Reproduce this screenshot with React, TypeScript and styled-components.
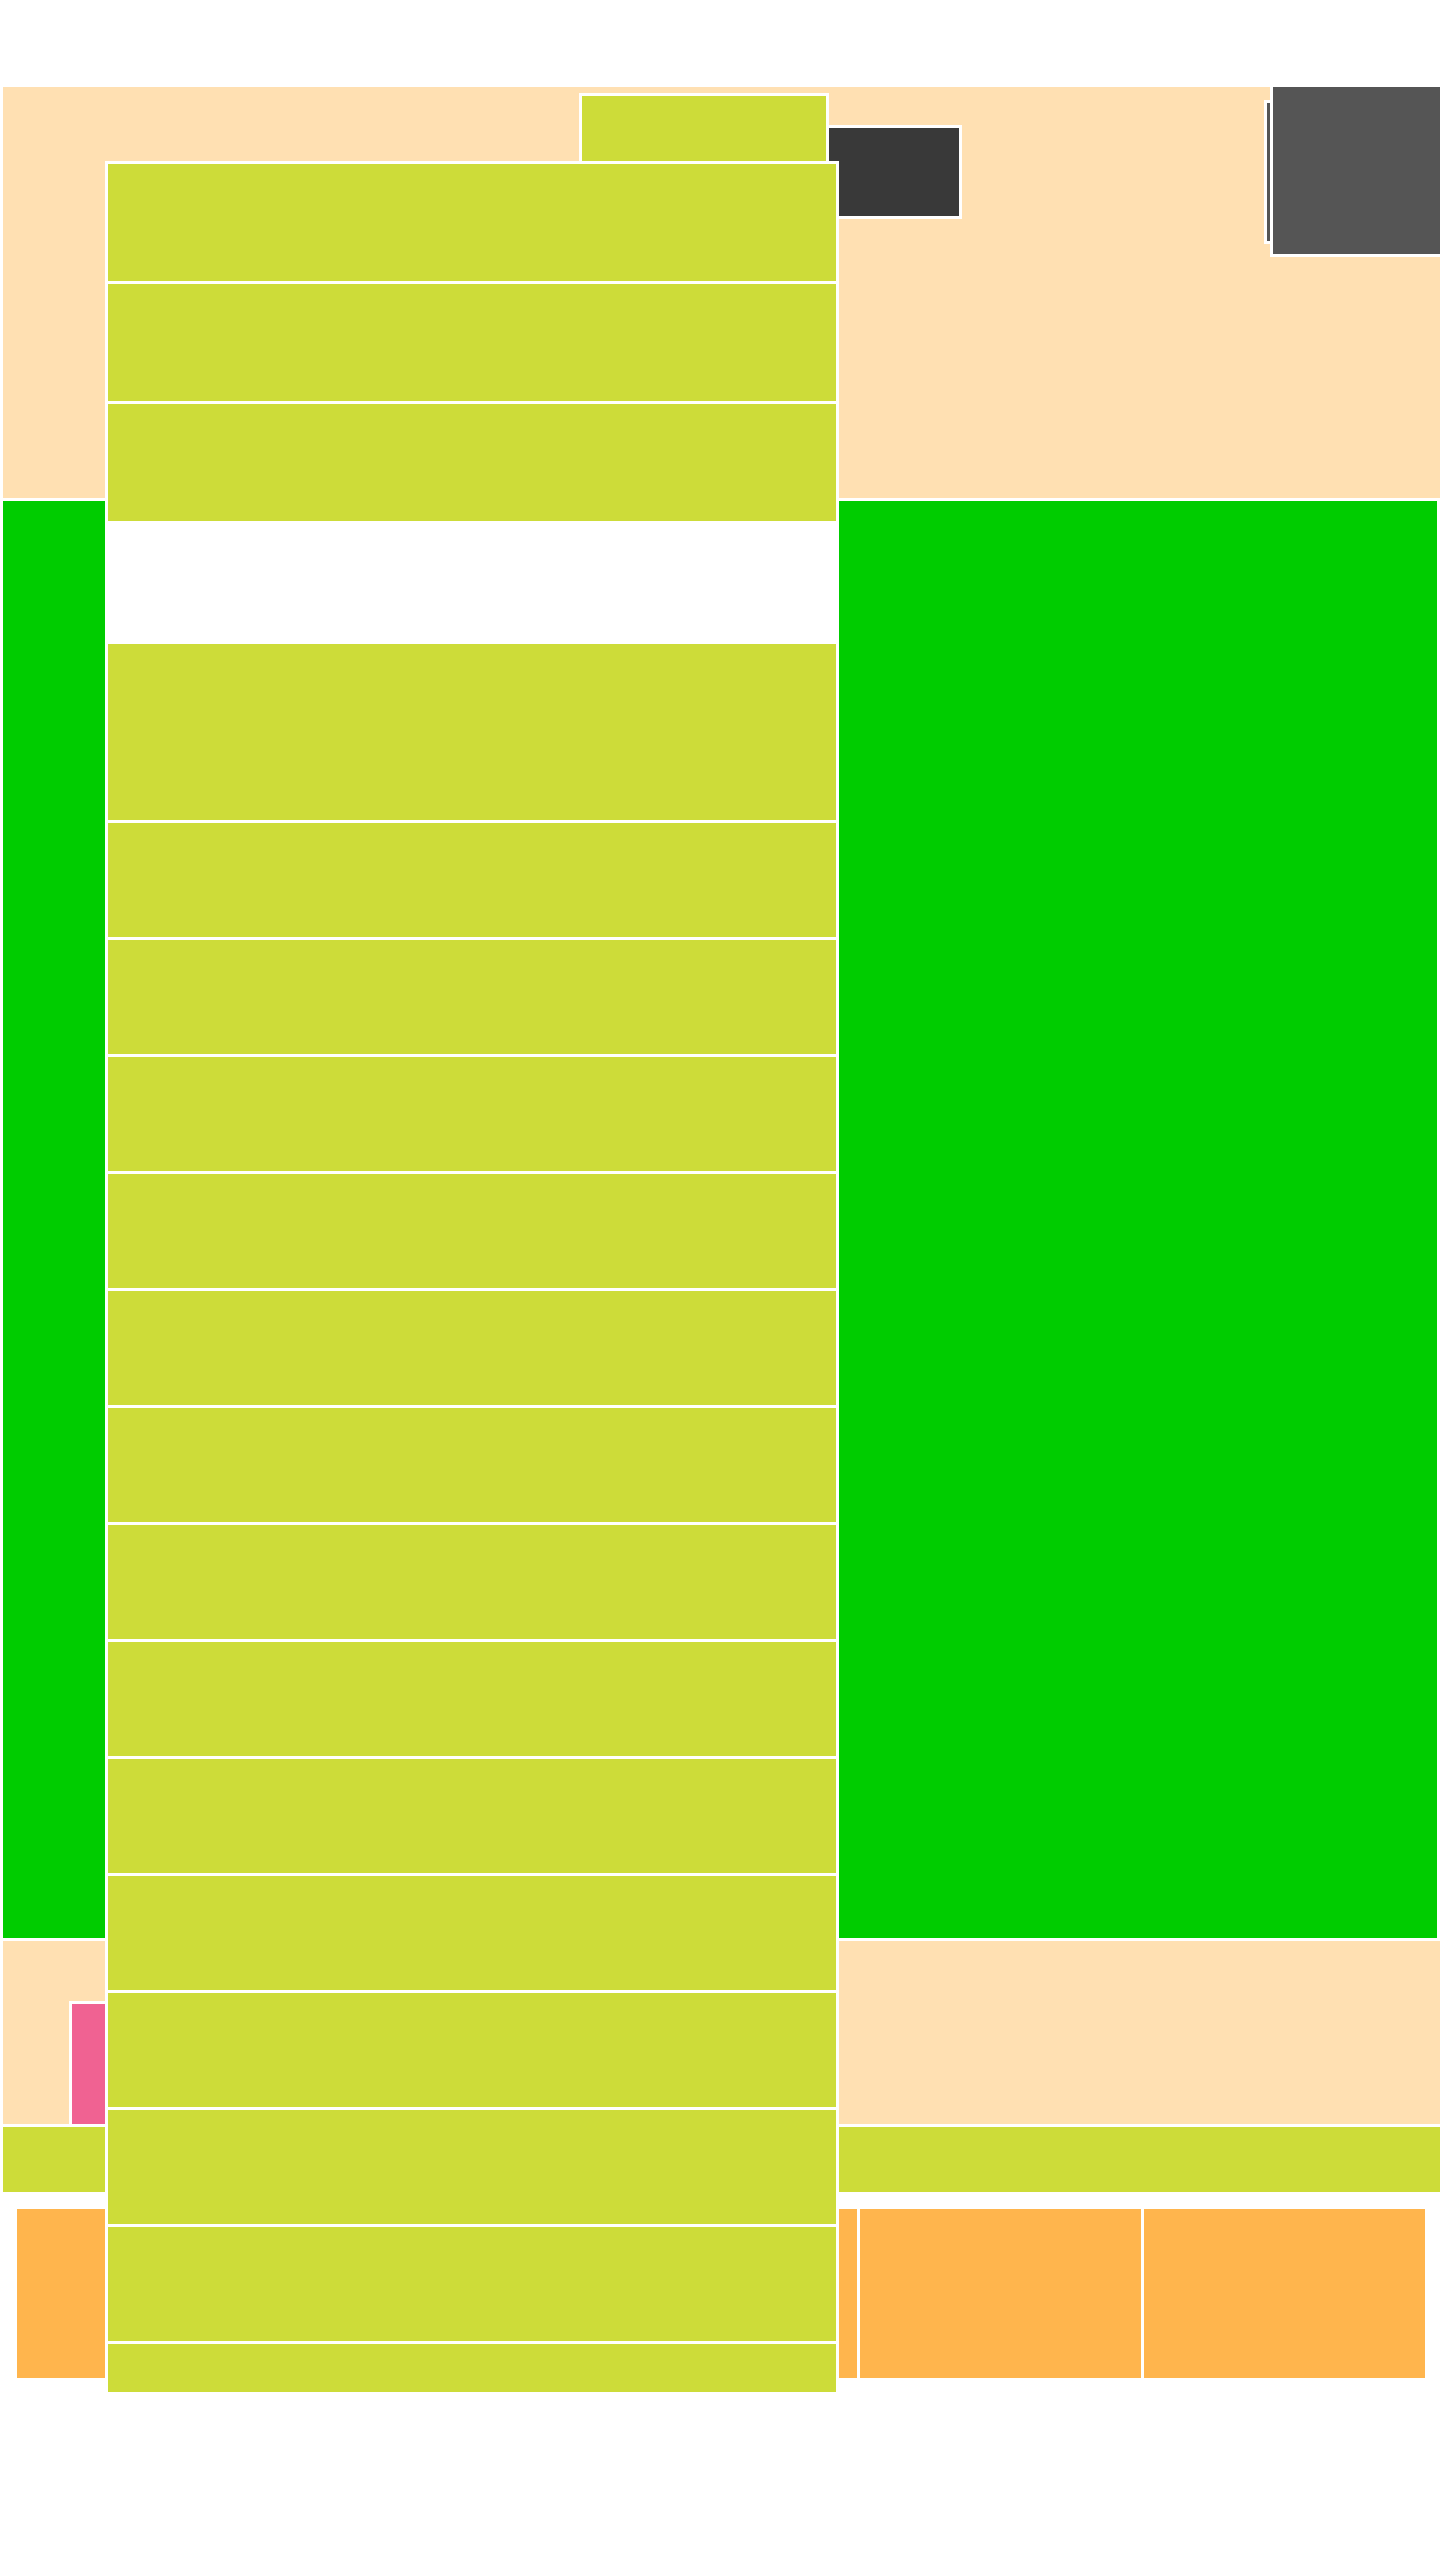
import React from "react";
import styled, { createGlobalStyle } from "styled-components";

const GlobalStyle = createGlobalStyle`
  *, *::before, *::after { box-sizing: border-box; }
  html, body { margin: 0; padding: 0; background: #ffffff; overflow-x: hidden; }
  body { font-family: "Liberation Sans", Arial, sans-serif; }
`;

const c = {
  peach: "#FFE0B2",
  lime: "#CDDC39",
  green: "#00CC00",
  orange: "#FFB54D",
  pink: "#F06292",
  dark: "#393939",
  gray: "#555555",
};

const Page = styled.div`
  position: relative;
  width: 1440px;
  min-height: 2560px;
  overflow: hidden;
  display: flex;
  flex-direction: column;
  gap: 3px;
  padding: 87px 0 0 3px;
`;

const Header = styled.header`
  position: relative;
  height: 411px;
  background: ${c.peach};
  display: flex;
  align-items: flex-start;
  padding-left: 576px;
`;

const Trigger = styled.div`
  position: relative;
  z-index: 1;
  width: 250px;
  height: 110px;
  margin-top: 6px;
  background: ${c.lime};
  border: 3px solid #fff;
`;

const DarkButton = styled.div`
  width: 173px;
  height: 94px;
  margin-top: 38px;
  margin-left: -40px;
  background: ${c.dark};
  border: 3px solid #fff;
`;

const SideButton = styled.div`
  width: 80px;
  height: 144px;
  margin-top: 13px;
  margin-left: 302px;
  background: ${c.gray};
  border: 3px solid #fff;
`;

const Popover = styled.div`
  position: absolute;
  z-index: 2;
  top: -3px;
  left: 1267px;
  width: 200px;
  height: 173px;
  background: ${c.gray};
  border: 3px solid #fff;
`;

const Main = styled.main`
  height: 1437px;
  margin-right: 3px;
  background: ${c.green};
`;

const Band = styled.section`
  height: 183px;
  background: ${c.peach};
  padding: 60px 0 0 66px;
  overflow: hidden;
`;

const Tag = styled.div`
  width: 200px;
  height: 126px;
  background: ${c.pink};
  border: 3px solid #fff;
`;

const Strip = styled.div`
  height: 65px;
  background: ${c.lime};
`;

const CardRow = styled.div`
  display: grid;
  grid-template-columns: 1fr repeat(4, 281px);
  gap: 3px;
  margin-top: 14px;
  padding: 0 15px 0 14px;
`;

const Card = styled.div`
  height: 169px;
  background: ${c.orange};
`;

const Menu = styled.div`
  position: absolute;
  z-index: 5;
  top: 161px;
  left: 105px;
  width: 734px;
  height: 2231px;
  overflow: hidden;
  background: #fff;
  padding: 3px 3px 0;
  display: flex;
  flex-direction: column;
  gap: 3px;
`;

const MenuItem = styled.div<{ $h: number; $blank?: boolean }>`
  flex: 0 0 auto;
  height: ${(p) => p.$h}px;
  background: ${(p) => (p.$blank ? "#fff" : c.lime)};
`;

const items: { h: number; blank?: boolean }[] = [
  { h: 117 },
  { h: 117 },
  { h: 117 },
  { h: 117, blank: true },
  { h: 176 },
  ...Array.from({ length: 14 }, () => ({ h: 114 })),
];

export default function App() {
  return (
    <>
      <GlobalStyle />
      <Page>
        <Header>
          <Trigger />
          <DarkButton />
          <SideButton />
          <Popover />
        </Header>
        <Main />
        <Band>
          <Tag />
        </Band>
        <Strip />
        <CardRow>
          {Array.from({ length: 5 }, (_, i) => (
            <Card key={i} />
          ))}
        </CardRow>
        <Menu>
          {items.map((it, i) => (
            <MenuItem key={i} $h={it.h} $blank={it.blank} />
          ))}
        </Menu>
      </Page>
    </>
  );
}
